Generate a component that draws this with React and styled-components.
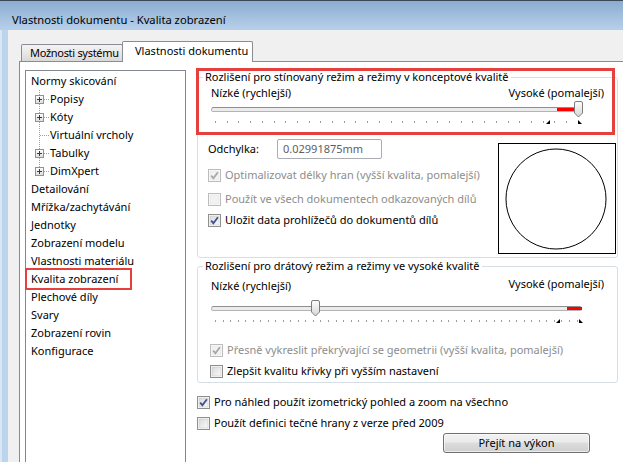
import React from "react";
import styled, { createGlobalStyle } from "styled-components";

const GlobalStyle = createGlobalStyle`
  html, body {
    margin: 0;
    padding: 0;
    background: #f0f0f0;
  }
  body {
    font-family: "Noto Sans", "Open Sans", sans-serif;
    font-size: 11px;
    line-height: 16px;
    color: #000;
  }
`;

const treeItems = [
  { label: "Normy skicování" },
  { label: "Popisy", child: true, plus: true },
  { label: "Kóty", child: true, plus: true },
  { label: "Virtuální vrcholy", child: true },
  { label: "Tabulky", child: true, plus: true },
  { label: "DimXpert", child: true, plus: true, last: true },
  { label: "Detailování" },
  { label: "Mřížka/zachytávání" },
  { label: "Jednotky" },
  { label: "Zobrazení modelu" },
  { label: "Vlastnosti materiálu" },
  { label: "Kvalita zobrazení", marked: true },
  { label: "Plechové díly" },
  { label: "Svary" },
  { label: "Zobrazení rovin" },
  { label: "Konfigurace" },
];

const circlePoints = () => {
  const pts = [];
  for (let i = 0; i < 48; i++) {
    const a = (i / 48) * Math.PI * 2;
    pts.push(`${(57 + 50 * Math.cos(a)).toFixed(1)},${(55 + 50 * Math.sin(a)).toFixed(1)}`);
  }
  return pts.join(" ");
};

const Connector = ({ plus, last }) => (
  <svg width="19" height="18">
    <line x1="8.5" y1="0" x2="8.5" y2={last ? 9 : 18} stroke="#a0a0a0" strokeDasharray="1 1" />
    <line x1={plus ? 13 : 9} y1="9.5" x2="18" y2="9.5" stroke="#a0a0a0" strokeDasharray="1 1" />
    {plus && (
      <>
        <rect x="4.5" y="5.5" width="8" height="8" fill="url(#plusGrad)" stroke="#919191" />
        <line x1="6" y1="9.5" x2="11" y2="9.5" stroke="#2f3b50" />
        <line x1="8.5" y1="7" x2="8.5" y2="12" stroke="#2f3b50" />
      </>
    )}
  </svg>
);

const CheckBox = ({ checked, disabled }) => (
  <svg width="13" height="13">
    <rect x="0.5" y="0.5" width="12" height="12" fill="#fff" stroke={disabled ? "#bcbcbc" : "#8e8f8f"} />
    <rect
      x="2"
      y="2"
      width="9"
      height="9"
      fill={disabled ? "#f2f2f2" : "url(#boxGrad)"}
      stroke={disabled ? "#e2e2e2" : "#c7c7c7"}
      strokeWidth="0.6"
    />
    {checked && (
      <path
        d="M3.2 6.6 L5.4 9.2 L9.9 3.2"
        fill="none"
        stroke={disabled ? "#a8a8a8" : "#3f5290"}
        strokeWidth="1.8"
      />
    )}
  </svg>
);

const Check = ({ label, checked, disabled, mt, shift = 0 }) => (
  <CheckRow $mt={mt} $shift={shift} $disabled={disabled}>
    <CheckBox checked={checked} disabled={disabled} />
    <span>{label}</span>
  </CheckRow>
);

const Slider = ({ width, value, range, markers, ticks, mt }) => (
  <SliderBox $w={width} $mt={mt}>
    <Track>
      <Range style={{ left: range[0], width: range[1] - range[0] }} />
    </Track>
    <Thumb width="11" height="17" style={{ left: value - 5.5 }}>
      <path
        d="M1.5 2 Q1.5 0.5 3 0.5 H8 Q9.5 0.5 9.5 2 V12 L5.5 16 L1.5 12 Z"
        fill="url(#thumbGrad)"
        stroke="#7d7d7d"
      />
    </Thumb>
    <Ticks>
      {Array.from({ length: ticks }).map((_, i) => (
        <Tick key={i} />
      ))}
      <Marker width="4" height="4" style={{ left: markers[0] - 3 }}>
        <polygon points="4,0 4,4 0,4" fill="#000" />
      </Marker>
      <Marker width="4" height="4" style={{ left: markers[1] }}>
        <polygon points="0,0 4,4 0,4" fill="#000" />
      </Marker>
    </Ticks>
  </SliderBox>
);

const App = () => {
  return (
    <>
      <GlobalStyle />
      <Defs width="0" height="0">
        <defs>
          <linearGradient id="plusGrad" x1="0" y1="0" x2="0" y2="1">
            <stop offset="0" stopColor="#ffffff" />
            <stop offset="1" stopColor="#dcdcdc" />
          </linearGradient>
          <linearGradient id="boxGrad" x1="0" y1="0" x2="1" y2="1">
            <stop offset="0" stopColor="#d9d9d9" />
            <stop offset="1" stopColor="#fbfbfb" />
          </linearGradient>
          <linearGradient id="thumbGrad" x1="0" y1="0" x2="0" y2="1">
            <stop offset="0" stopColor="#fdfdfd" />
            <stop offset="1" stopColor="#d6d6d6" />
          </linearGradient>
        </defs>
      </Defs>
      <Window>
        <TitleBar>Vlastnosti dokumentu - Kvalita zobrazení</TitleBar>
        <Body>
          <Frame />
          <Client>
            <Tabs>
              <Tab>Možnosti systému</Tab>
              <Tab $active>Vlastnosti dokumentu</Tab>
            </Tabs>
            <Panel>
              <Tree>
                {treeItems.map((item) => (
                  <TreeRow key={item.label}>
                    {item.child && <Connector plus={item.plus} last={item.last} />}
                    <TreeLabel $marked={item.marked}>{item.label}</TreeLabel>
                  </TreeRow>
                ))}
              </Tree>
              <Content>
                <Marked>
                  <Group $pb={3}>
                    <Legend>Rozlišení pro stínovaný režim a režimy v konceptové kvalitě</Legend>
                    <Labels>
                      <span>Nízké (rychlejší)</span>
                      <span>Vysoké (pomalejší)</span>
                    </Labels>
                    <Slider width={372} value={367} range={[345, 364]} markers={[338, 367]} ticks={32} mt={0} />
                    <Lower>
                      <LeftCol>
                        <FieldRow>
                          <FieldLabel>Odchylka:</FieldLabel>
                          <TextBox>0.02991875mm</TextBox>
                        </FieldRow>
                        <Check label="Optimalizovat délky hran (vyšší kvalita, pomalejší)" checked disabled mt={8} />
                        <Check label="Použít ve všech dokumentech odkazovaných dílů" disabled mt={8} />
                        <Check label="Uložit data prohlížečů do dokumentů dílů" checked mt={5} />
                      </LeftCol>
                      <Preview>
                        <svg width="116" height="109">
                          <polygon points={circlePoints()} fill="none" stroke="#000" />
                        </svg>
                      </Preview>
                    </Lower>
                  </Group>
                  <Annotation />
                </Marked>
                <Group $pb={3}>
                  <Legend>Rozlišení pro drátový režim a režimy ve vysoké kvalitě</Legend>
                  <Labels $mt={4}>
                    <span>Nízké (rychlejší)</span>
                    <Raised>Vysoké (pomalejší)</Raised>
                  </Labels>
                  <Slider width={371} value={104} range={[355, 370]} markers={[348, 368]} ticks={49} mt={6} />
                  <Check
                    label="Přesně vykreslit překrývající se geometrii (vyšší kvalita, pomalejší)"
                    checked
                    disabled
                    mt={18}
                    shift={-1}
                  />
                  <Check label="Zlepšit kvalitu křivky při vyšším nastavení" mt={5} shift={-1} />
                </Group>
                <Check label="Pro náhled použít izometrický pohled a zoom na všechno" checked mt={11} />
                <Check label="Použít definici tečné hrany z verze před 2009" mt={5} />
                <Button>Přejít na výkon</Button>
              </Content>
            </Panel>
          </Client>
        </Body>
      </Window>
    </>
  );
};

const Defs = styled.svg`
  position: absolute;
  width: 0;
  height: 0;
`;

const Window = styled.div`
  width: 623px;
  height: 462px;
  overflow: hidden;
  display: flex;
  flex-direction: column;
  box-sizing: border-box;
  border-top: 1px solid #3b4856;
  background: #bcd4ee;
`;

const TitleBar = styled.div`
  flex: none;
  height: 29px;
  box-sizing: border-box;
  padding: 11px 0 0 12px;
  background: linear-gradient(#8badd0, #b8d0ea);
  font-size: 11.2px;
  line-height: 16px;
  white-space: nowrap;
`;

const Body = styled.div`
  flex: 1;
  display: flex;
  min-height: 0;
`;

const Frame = styled.div`
  flex: none;
  width: 8px;
  background: linear-gradient(to right, #dbe7f4 0 2px, #bcd4ee 2px);
`;

const Client = styled.div`
  flex: 1;
  display: flex;
  flex-direction: column;
  min-width: 0;
  padding: 11px 0 0 11px;
  background: #f0f0f0;
`;

const Tabs = styled.div`
  display: flex;
  align-items: flex-end;
  margin-left: 2px;
  position: relative;
  z-index: 1;
`;

const Tab = styled.div`
  box-sizing: border-box;
  border: 1px solid #898c95;
  border-bottom: 0;
  border-radius: 2px 2px 0 0;
  white-space: nowrap;
  overflow: hidden;
  letter-spacing: ${(p) => (p.$active ? "0" : "-0.3px")};
  width: ${(p) => (p.$active ? 131 : 102)}px;
  height: ${(p) => (p.$active ? 21 : 17)}px;
  margin: ${(p) => (p.$active ? "0 0 -1px -1px" : "0")};
  padding: ${(p) => (p.$active ? "1px 0 0 12px" : "0 0 0 8px")};
  background: ${(p) =>
    p.$active ? "#ffffff" : "linear-gradient(#f3f3f3, #e8e8e8 50%, #d9d9d9)"};
`;

const Panel = styled.div`
  flex: 1;
  display: flex;
  align-items: flex-start;
  margin-right: -12px;
  padding: 8px 0 0 5px;
  border: 1px solid #898c95;
  background: #ffffff;
`;

const Tree = styled.div`
  flex: none;
  width: 161px;
  height: 420px;
  box-sizing: border-box;
  padding: 1px 0 0 5px;
  border: 1px solid #828790;
`;

const TreeRow = styled.div`
  display: flex;
  align-items: center;
  height: 18px;
  line-height: 18px;
  white-space: nowrap;
`;

const TreeLabel = styled.span`
  position: relative;
  ${(p) =>
    p.$marked &&
    `
    &::after {
      content: "";
      position: absolute;
      left: -6px;
      top: -2px;
      width: 107px;
      height: 22px;
      box-sizing: border-box;
      border: 2.5px solid #e5403d;
    }
  `}
`;

const Content = styled.div`
  flex: none;
  width: 421px;
  margin: -1px 0 0 11px;
  display: flex;
  flex-direction: column;
`;

const Marked = styled.div`
  position: relative;
  display: flex;
  flex-direction: column;
`;

const Annotation = styled.div`
  position: absolute;
  left: -1px;
  top: -1px;
  width: 419px;
  height: 67px;
  box-sizing: border-box;
  border: 3px solid #e5403d;
  pointer-events: none;
`;

const Group = styled.fieldset`
  margin: 0;
  min-width: 0;
  display: flex;
  flex-direction: column;
  padding: 0 1px ${(p) => p.$pb}px 13px;
  border: 1px solid #d5dfe5;
  border-radius: 3px;
`;

const Legend = styled.legend`
  margin-left: -8px;
  padding: 0 2px;
  line-height: 16px;
  white-space: nowrap;
`;

const Labels = styled.div`
  display: flex;
  justify-content: space-between;
  align-items: flex-start;
  width: 393px;
  margin-top: ${(p) => p.$mt || 0}px;
  white-space: nowrap;
`;

const Raised = styled.span`
  position: relative;
  top: -2px;
`;

const SliderBox = styled.div`
  position: relative;
  width: ${(p) => p.$w}px;
  height: 24px;
  margin-top: ${(p) => p.$mt}px;
`;

const Track = styled.div`
  position: relative;
  margin-top: 6px;
  height: 5px;
  box-sizing: border-box;
  border: 1px solid #b4b4b4;
  border-top-color: #8f8f8f;
  border-radius: 3px;
  background: #ececec;
`;

const Range = styled.div`
  position: absolute;
  top: 0;
  bottom: 0;
  background: #ff0000;
`;

const Thumb = styled.svg`
  position: absolute;
  top: 0;
`;

const Ticks = styled.div`
  position: relative;
  display: flex;
  justify-content: space-between;
  height: 3px;
  margin-top: 9px;
  padding: 0 4px;
`;

const Tick = styled.span`
  width: 1px;
  height: 2px;
  background: #9c9c9c;
`;

const Marker = styled.svg`
  position: absolute;
  top: -1px;
`;

const Lower = styled.div`
  display: flex;
  align-items: flex-start;
  margin: 14px 0 0 -3px;
`;

const LeftCol = styled.div`
  flex: 1;
  display: flex;
  flex-direction: column;
`;

const FieldRow = styled.div`
  display: flex;
  align-items: center;
`;

const FieldLabel = styled.span`
  width: 69px;
`;

const TextBox = styled.div`
  width: 105px;
  height: 20px;
  box-sizing: border-box;
  padding-left: 5px;
  line-height: 18px;
  border: 1px solid #abadb3;
  border-radius: 2px;
  color: #606060;
`;

const Preview = styled.div`
  flex: none;
  width: 118px;
  height: 111px;
  box-sizing: border-box;
  margin-top: 4px;
  border: 1px solid #000;
  background: #fff;
`;

const CheckRow = styled.div`
  display: flex;
  align-items: center;
  gap: 4px;
  height: 16px;
  margin-top: ${(p) => p.$mt}px;
  margin-left: ${(p) => p.$shift}px;
  white-space: nowrap;
  color: ${(p) => (p.$disabled ? "#8d8d8d" : "#000")};
`;

const Button = styled.button`
  align-self: flex-end;
  width: 147px;
  height: 20px;
  margin: 2px 28px 0 0;
  padding: 0;
  border: 1px solid #707070;
  border-radius: 3px;
  background: linear-gradient(#f2f2f2 0%, #ebebeb 45%, #dddddd 50%, #cfcfcf 100%);
  box-shadow: inset 0 0 0 1px rgba(255, 255, 255, 0.6);
  font: inherit;
  color: #000;
`;

export default App;
